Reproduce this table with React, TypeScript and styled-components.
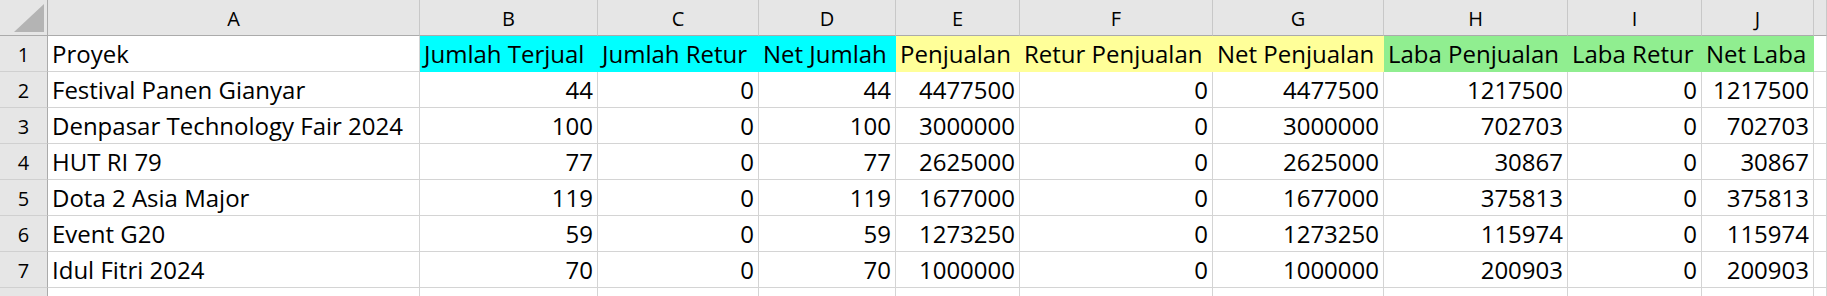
import React from "react";
import styled, { createGlobalStyle } from "styled-components";

const GlobalStyle = createGlobalStyle`
  html, body {
    margin: 0;
    padding: 0;
    background: #ffffff;
    overflow: hidden;
  }
  body {
    font-family: "Open Sans", Lato, sans-serif;
    color: #000000;
  }
`;

const COLS = [372, 178, 161, 137, 124, 193, 171, 184, 134, 112];
const LETTERS = ["A", "B", "C", "D", "E", "F", "G", "H", "I", "J", ""];

const Sheet = styled.div`
  display: grid;
  grid-template-columns: 48px ${COLS.map((c) => `${c}px`).join(" ")} 1fr;
  grid-auto-rows: 36px;
  width: 1827px;
  height: 296px;
  overflow: hidden;
`;

const Corner = styled.div`
  background: #e6e6e6;
  border-right: 1px solid #ababab;
  border-bottom: 1px solid #ababab;
  box-sizing: border-box;
  display: flex;
  align-items: flex-end;
  justify-content: flex-end;
  padding: 0 3px 3px 0;
`;

const ColHeader = styled.div`
  background: #e6e6e6;
  border-right: 1px solid #c8c8c8;
  border-bottom: 1px solid #ababab;
  box-sizing: border-box;
  display: flex;
  align-items: center;
  justify-content: center;
  padding-top: 3px;
  font-size: 20px;
  line-height: 20px;
`;

const RowHeader = styled.div`
  background: #e6e6e6;
  border-right: 1px solid #ababab;
  border-bottom: 1px solid #d0d0d0;
  box-sizing: border-box;
  display: flex;
  align-items: center;
  justify-content: center;
  padding-top: 2px;
  font-size: 20px;
  line-height: 20px;
`;

type Fill = "none" | "cyan" | "yellow" | "green";
const FILLS: Record<Fill, string> = {
  none: "#ffffff",
  cyan: "#00ffff",
  yellow: "#ffff99",
  green: "#90ee90",
};

const Cell = styled.div<{ $align?: "left" | "right"; $fill?: Fill }>`
  background: ${(p) => FILLS[p.$fill ?? "none"]};
  border-right: 1px solid
    ${(p) => (p.$fill && p.$fill !== "none" ? "transparent" : "#d4d4d4")};
  border-bottom: 1px solid
    ${(p) => (p.$fill && p.$fill !== "none" ? "transparent" : "#d4d4d4")};
  box-sizing: border-box;
  display: flex;
  align-items: center;
  justify-content: ${(p) => (p.$align === "right" ? "flex-end" : "flex-start")};
  padding: 1px ${(p) => (p.$align === "right" ? "4px" : "0")} 0
    ${(p) => (p.$align === "right" ? "0" : "4px")};
  font-size: 24px;
  line-height: 24px;
  white-space: nowrap;
`;

const headers: { label: string; fill: Fill }[] = [
  { label: "Proyek", fill: "none" },
  { label: "Jumlah Terjual", fill: "cyan" },
  { label: "Jumlah Retur", fill: "cyan" },
  { label: "Net Jumlah", fill: "cyan" },
  { label: "Penjualan", fill: "yellow" },
  { label: "Retur Penjualan", fill: "yellow" },
  { label: "Net Penjualan", fill: "yellow" },
  { label: "Laba Penjualan", fill: "green" },
  { label: "Laba Retur", fill: "green" },
  { label: "Net Laba", fill: "green" },
];

const rows: (string | number)[][] = [
  ["Festival Panen Gianyar", 44, 0, 44, 4477500, 0, 4477500, 1217500, 0, 1217500],
  ["Denpasar Technology Fair 2024", 100, 0, 100, 3000000, 0, 3000000, 702703, 0, 702703],
  ["HUT RI 79", 77, 0, 77, 2625000, 0, 2625000, 30867, 0, 30867],
  ["Dota 2 Asia Major", 119, 0, 119, 1677000, 0, 1677000, 375813, 0, 375813],
  ["Event G20", 59, 0, 59, 1273250, 0, 1273250, 115974, 0, 115974],
  ["Idul Fitri 2024", 70, 0, 70, 1000000, 0, 1000000, 200903, 0, 200903],
];

export default function App() {
  return (
    <>
      <GlobalStyle />
      <Sheet>
        <Corner>
          <svg width="30" height="28" viewBox="0 0 30 28">
            <polygon points="30,0 30,28 0,28" fill="#b4b4b4" />
          </svg>
        </Corner>
        {LETTERS.map((l, i) => (
          <ColHeader key={`h${i}`}>{l}</ColHeader>
        ))}

        <RowHeader>1</RowHeader>
        {headers.map((h, i) => (
          <Cell key={`r1-${i}`} $fill={h.fill}>
            {h.label}
          </Cell>
        ))}
        <Cell />

        {rows.map((r, ri) => (
          <React.Fragment key={`row${ri}`}>
            <RowHeader>{ri + 2}</RowHeader>
            {r.map((v, ci) => (
              <Cell key={`c${ri}-${ci}`} $align={typeof v === "number" ? "right" : "left"}>
                {v}
              </Cell>
            ))}
            <Cell />
          </React.Fragment>
        ))}

        <RowHeader />
        {LETTERS.map((_, i) => (
          <Cell key={`e${i}`} />
        ))}
      </Sheet>
    </>
  );
}
